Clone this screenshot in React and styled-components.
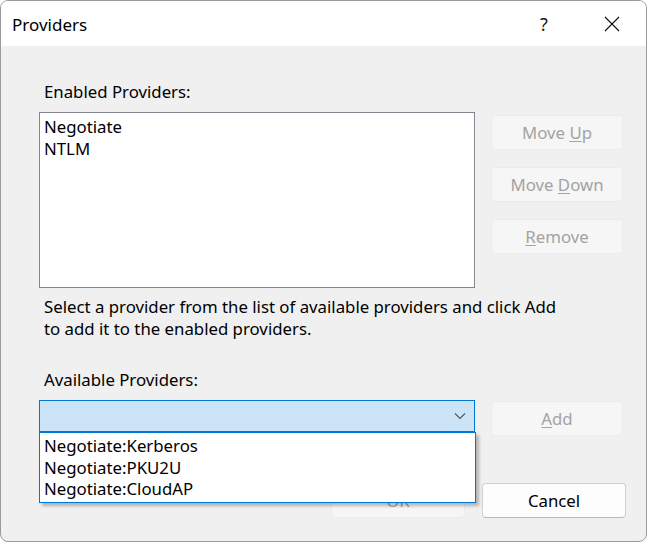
import React from 'react'
import styled, { createGlobalStyle } from 'styled-components'

const Global = createGlobalStyle`
  html, body {
    margin: 0;
    padding: 0;
    background: #ffffff;
  }
  body {
    font-family: "Noto Sans", "Open Sans", sans-serif;
    font-size: 16.8px;
    color: #000;
  }
`

const Window = styled.div`
  box-sizing: border-box;
  width: 647px;
  height: 542px;
  border: 1px solid #9a9a9a;
  border-radius: 8px;
  overflow: hidden;
  display: flex;
  flex-direction: column;
  background: #f0f0f0;
`

const TitleBar = styled.div`
  height: 45px;
  flex: none;
  background: #ffffff;
  display: flex;
  align-items: center;
  padding-left: 11px;

  .title {
    flex: 1;
    font-size: 17px;
    padding-top: 2px;
  }
`

const CaptionButton = styled.div`
  width: 68px;
  height: 45px;
  display: flex;
  align-items: center;
  justify-content: center;
  font-size: 18px;
  color: #1a1a1a;
`

const Body = styled.div`
  flex: 1;
  padding: 36px 22px 0 38px;
  display: flex;
  flex-direction: column;
`

const Label = styled.div`
  line-height: 20px;
  padding-left: 5px;
  margin-top: ${p => p.$top || 0}px;
`

const Row = styled.div`
  display: flex;
  gap: 16px;
  margin-top: ${p => p.$top || 0}px;
`

const ListBox = styled.div`
  box-sizing: border-box;
  width: 436px;
  height: ${p => p.$height}px;
  background: #ffffff;
  border: 1px solid #828790;
  padding: 3px 4px;
  line-height: 22px;
`

const ButtonColumn = styled.div`
  display: flex;
  flex-direction: column;
  padding-top: 3px;
  gap: 17px;
`

const Button = styled.div`
  box-sizing: border-box;
  width: ${p => p.$width || 132}px;
  height: 35px;
  margin-top: ${p => p.$top || 0}px;
  border-radius: 4px;
  display: flex;
  align-items: center;
  justify-content: center;
  background: ${p => (p.$disabled ? '#f6f6f6' : '#fdfdfd')};
  border: 1px solid ${p => (p.$disabled ? '#ebebeb' : '#d0d0d0')};
  border-bottom-color: ${p => (p.$disabled ? '#ebebeb' : '#b8b8b8')};
  color: ${p => (p.$disabled ? '#a3a3a3' : '#000')};

  u {
    text-underline-offset: 2px;
  }
`

const HelpText = styled.div`
  line-height: 22px;
  padding-left: 5px;
  margin-top: 8px;
`

const ComboWrap = styled.div`
  position: relative;
  width: 436px;
`

const Combo = styled.div`
  box-sizing: border-box;
  width: 436px;
  height: 32px;
  background: #cce4f7;
  border: 1px solid #0078d7;
  display: flex;
  align-items: center;
  justify-content: flex-end;
  padding-right: 8px;
`

const DropList = styled.div`
  position: absolute;
  left: 0;
  top: 32px;
  box-sizing: border-box;
  width: 437px;
  height: 71px;
  background: #ffffff;
  border: 1px solid #0078d7;
  box-shadow: 3px 3px 3px rgba(0, 0, 0, 0.25);
  padding: 2px 4px;
  line-height: 21.5px;
  z-index: 2;
`

const Footer = styled.div`
  display: flex;
  justify-content: flex-end;
  gap: 17px;
  margin-top: 47px;
  margin-right: -2px;
`

const Chevron = () => (
  <svg width="12" height="8" viewBox="0 0 12 8">
    <path d="M1 1.5 L6 6.5 L11 1.5" fill="none" stroke="#555" strokeWidth="1.1" />
  </svg>
)

const CloseIcon = () => (
  <svg width="16" height="16" viewBox="0 0 16 16">
    <path d="M1 1 L15 15 M15 1 L1 15" stroke="#111" strokeWidth="1.1" />
  </svg>
)

export default function App() {
  return (
    <>
      <Global />
      <Window>
        <TitleBar>
          <span className="title">Providers</span>
          <CaptionButton>?</CaptionButton>
          <CaptionButton>
            <CloseIcon />
          </CaptionButton>
        </TitleBar>
        <Body>
          <Label>Enabled Providers:</Label>
          <Row $top={10}>
            <ListBox $height={176}>
              <div>Negotiate</div>
              <div>NTLM</div>
            </ListBox>
            <ButtonColumn>
              <Button $disabled>
                Move&nbsp;<u>U</u>p
              </Button>
              <Button $disabled>
                Move&nbsp;<u>D</u>own
              </Button>
              <Button $disabled>
                <u>R</u>emove
              </Button>
            </ButtonColumn>
          </Row>
          <HelpText>
            Select a provider from the list of available providers and click Add
            <br />
            to add it to the enabled providers.
          </HelpText>
          <Label $top={30}>Available Providers:</Label>
          <Row $top={10}>
            <ComboWrap>
              <Combo>
                <Chevron />
              </Combo>
              <DropList>
                <div>Negotiate:Kerberos</div>
                <div>Negotiate:PKU2U</div>
                <div>Negotiate:CloudAP</div>
              </DropList>
            </ComboWrap>
            <Button $disabled $top={1}>
              <u>A</u>dd
            </Button>
          </Row>
          <Footer>
            <Button $disabled $width={134}>
              OK
            </Button>
            <Button $width={144}>Cancel</Button>
          </Footer>
        </Body>
      </Window>
    </>
  )
}
